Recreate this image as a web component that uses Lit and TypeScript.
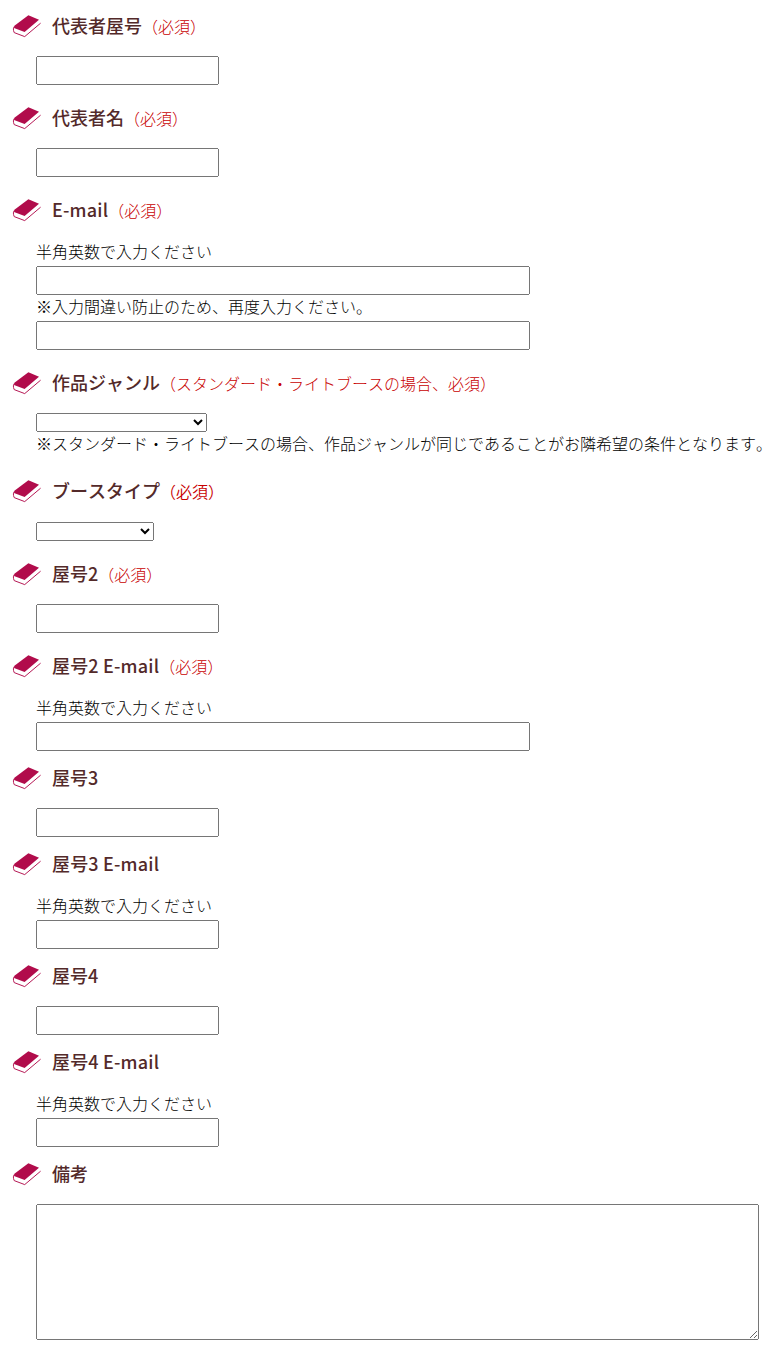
import { LitElement, html, css, nothing } from "lit";
import { customElement, property } from "lit/decorators.js";

type Control =
  | { kind: "text"; wide?: boolean; hint?: string }
  | { kind: "select"; size: "genre" | "booth"; note?: string }
  | { kind: "textarea" };

interface Field {
  label: string;
  latin?: boolean;
  required?: string;
  strong?: boolean;
  controls: Control[];
}

const REQUIRED = "（必須）";
const HINT = "半角英数で入力ください";

const FIELDS: Field[] = [
  { label: "代表者屋号", required: REQUIRED, controls: [{ kind: "text" }] },
  { label: "代表者名", required: REQUIRED, controls: [{ kind: "text" }] },
  {
    label: "E-mail",
    latin: true,
    required: REQUIRED,
    controls: [
      { kind: "text", wide: true, hint: HINT },
      { kind: "text", wide: true, hint: "※入力間違い防止のため、再度入力ください。" },
    ],
  },
  {
    label: "作品ジャンル",
    required: "（スタンダード・ライトブースの場合、必須）",
    controls: [
      {
        kind: "select",
        size: "genre",
        note: "※スタンダード・ライトブースの場合、作品ジャンルが同じであることがお隣希望の条件となります。",
      },
    ],
  },
  { label: "ブースタイプ", required: REQUIRED, strong: true, controls: [{ kind: "select", size: "booth" }] },
  { label: "屋号2", required: REQUIRED, controls: [{ kind: "text" }] },
  { label: "屋号2 E-mail", latin: true, required: REQUIRED, controls: [{ kind: "text", wide: true, hint: HINT }] },
  { label: "屋号3", controls: [{ kind: "text" }] },
  { label: "屋号3 E-mail", latin: true, controls: [{ kind: "text", hint: HINT }] },
  { label: "屋号4", controls: [{ kind: "text" }] },
  { label: "屋号4 E-mail", latin: true, controls: [{ kind: "text", hint: HINT }] },
  { label: "備考", controls: [{ kind: "textarea" }] },
];

@customElement("book-icon")
export class BookIcon extends LitElement {
  static styles = css`
    :host { display: block; width: 30px; height: 24px; }
    .book { display: block; }
  `;

  render() {
    return html`<svg class="book" width="30" height="24" viewBox="0 0 30 24" aria-hidden="true">
      <path d="M16.4 1.2 L27 5.8 L12.6 18 L2 14 L2.4 11.8 Z" fill="#b10c4b" />
      <path
        d="M2.4 12.4 C1.2 13.8 1 15.6 2.2 18.6 L12.7 22.6 L28.6 9.2"
        fill="none" stroke="#b10c4b" stroke-width="0.95" stroke-linejoin="round" />
    </svg>`;
  }
}

@customElement("form-field")
export class FormField extends LitElement {
  @property({ attribute: false }) field!: Field;

  static styles = css`
    :host { display: block; }
    .heading {
      display: flex;
      align-items: center;
      height: 24px;
      margin: 15px 0 18px;
      padding-left: 12px;
      font-size: 18px;
      font-weight: 500;
      line-height: 24px;
      color: #532a2a;
      white-space: nowrap;
    }
    .heading.required { margin-top: 21px; }
    .label { margin-left: 10px; padding-bottom: 2px; }
    .label.latin { letter-spacing: 0.18px; }
    .mark { font-size: 16px; font-weight: 300; color: #c80000; }
    .mark.strong { font-weight: 350; }
    .body { display: flex; flex-direction: column; align-items: flex-start; padding-left: 36px; }
    .hint { height: 26px; line-height: 22px; white-space: nowrap; }
    .text, .select, .area { box-sizing: border-box; margin: 0; }
    .text { width: 183px; height: 29px; }
    .text.wide { width: 494px; }
    .select { height: 19px; font-size: 13.333px; }
    .select.genre { width: 171px; }
    .select.booth { width: 118px; margin-top: 1px; }
    .area { display: block; width: 723px; height: 136px; }
  `;

  private control(c: Control) {
    switch (c.kind) {
      case "text":
        return html`${c.hint ? html`<div class="hint">${c.hint}</div>` : nothing}
          <input class="text ${c.wide ? "wide" : ""}" type="text" />`;
      case "select":
        return html`<select class="select ${c.size}"><option></option></select>
          ${c.note ? html`<div class="hint">${c.note}</div>` : nothing}`;
      case "textarea":
        return html`<textarea class="area"></textarea>`;
    }
  }

  render() {
    const { label, latin, required, strong, controls } = this.field;
    return html`
      <div class="heading ${required ? "required" : ""}">
        <book-icon></book-icon>
        <span class="label ${latin ? "latin" : ""}">${label}</span>
        ${required ? html`<span class="mark ${strong ? "strong" : ""}">${required}</span>` : nothing}
      </div>
      <div class="body">${controls.map((c) => this.control(c))}</div>
    `;
  }
}

@customElement("app-root")
export class AppRoot extends LitElement {
  static styles = css`
    :host {
      display: block;
      box-sizing: border-box;
      height: 1356px;
      overflow: hidden;
      background: #fff;
      color: #000;
      font-family: "Noto Sans CJK JP", sans-serif;
      font-size: 16px;
      font-weight: 300;
      font-kerning: none;
    }
    .form { display: flex; flex-direction: column; margin-top: -7px; }
  `;

  render() {
    return html`<div class="form">
      ${FIELDS.map((f) => html`<form-field .field=${f}></form-field>`)}
    </div>`;
  }
}
